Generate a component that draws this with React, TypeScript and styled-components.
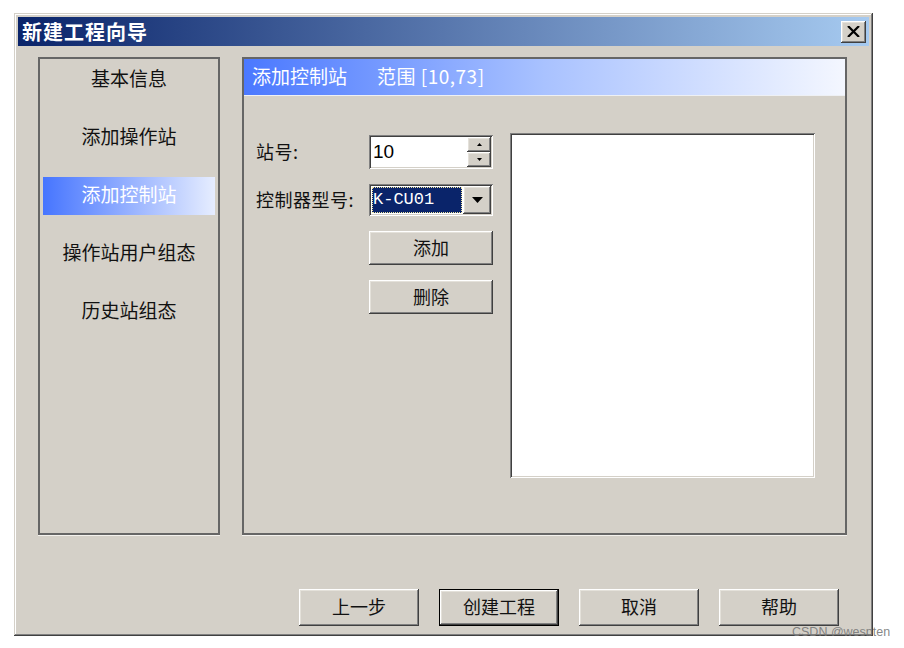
import styled, { createGlobalStyle, css } from 'styled-components';

const GlobalStyle = createGlobalStyle`
  body {
    margin: 0;
    background: #ffffff;
    font-family: "Noto Sans CJK SC", "Liberation Sans", sans-serif;
  }
`;

const raised = css`
  box-shadow: inset -1px -1px #404040, inset 1px 1px #ffffff,
    inset -2px -2px #808080, inset 2px 2px #e4e1da;
`;

const sunken = css`
  box-shadow: inset 1px 1px #808080, inset -1px -1px #ffffff,
    inset 2px 2px #404040, inset -2px -2px #d4d0c8;
`;

const navItems = ['基本信息', '添加操作站', '添加控制站', '操作站用户组态', '历史站组态'];
const footerButtons = ['上一步', '创建工程', '取消', '帮助'];

function App() {
  return (
    <>
      <GlobalStyle />
      <Window>
        <TitleBar>
          <TitleText>新建工程向导</TitleText>
          <CloseButton>
            <svg width="13" height="11" viewBox="0 0 13 11">
              <path d="M1 0 L12 11 M12 0 L1 11" stroke="#000" strokeWidth="2.2" />
            </svg>
          </CloseButton>
        </TitleBar>

        <Body>
          <NavPanel>
            {navItems.map((item, i) => (
              <NavItem key={item} active={i === 2}>{item}</NavItem>
            ))}
          </NavPanel>

          <MainPanel>
            <Header>
              添加控制站
              <Range>范围 [10,73]</Range>
            </Header>
            <Content>
              <Form>
                <Label>站号:</Label>
                <Spinner>
                  <SpinValue>10</SpinValue>
                  <SpinButtons>
                    <SpinButton>
                      <svg width="5" height="3" viewBox="0 0 5 3"><polygon points="2.5,0 5,3 0,3" fill="#000" /></svg>
                    </SpinButton>
                    <SpinButton>
                      <svg width="5" height="3" viewBox="0 0 5 3"><polygon points="0,0 5,0 2.5,3" fill="#000" /></svg>
                    </SpinButton>
                  </SpinButtons>
                </Spinner>

                <Label>控制器型号:</Label>
                <Combo>
                  <ComboValue>K-CU01</ComboValue>
                  <ComboArrow>
                    <svg width="11" height="6" viewBox="0 0 11 6"><polygon points="0,0 11,0 5.5,6" fill="#000" /></svg>
                  </ComboArrow>
                </Combo>

                <FormButton>添加</FormButton>
                <FormButton>删除</FormButton>
              </Form>
              <ListBox />
            </Content>
          </MainPanel>
        </Body>

        <Footer>
          {footerButtons.map((label) => (
            <DialogButton key={label} isDefault={label === '创建工程'}>{label}</DialogButton>
          ))}
        </Footer>

        <Watermark>CSDN @wespten</Watermark>
      </Window>
    </>
  );
}

export default App;

const Window = styled.div`
  position: relative;
  margin: 13px 0 0 14px;
  width: 859px;
  height: 623px;
  box-sizing: border-box;
  padding: 4px;
  background: #d4d0c8;
  box-shadow: inset -1px -1px #404040, inset 1px 1px #d4d0c8,
    inset -2px -2px #808080, inset 2px 2px #ffffff;
  display: flex;
  flex-direction: column;
`;

const TitleBar = styled.div`
  height: 29px;
  display: flex;
  align-items: center;
  justify-content: space-between;
  padding: 0 3px 0 4px;
  background: linear-gradient(to right, #0a246a, #a6caf0);
`;

const TitleText = styled.div`
  color: #ffffff;
  font-size: 20px;
  font-weight: 700;
  letter-spacing: 1px;
  line-height: 29px;
`;

const CloseButton = styled.div`
  width: 25px;
  height: 22px;
  background: #d4d0c8;
  ${raised};
  display: flex;
  align-items: center;
  justify-content: center;
`;

const Body = styled.div`
  display: flex;
  gap: 22px;
  padding: 11px 0 0 20px;
`;

const NavPanel = styled.div`
  width: 182px;
  height: 478px;
  box-sizing: border-box;
  border: 2px solid #666666;
  box-shadow: 0 1px 0 #f4f2ee;
  padding: 2px 3px 0;
  display: flex;
  flex-direction: column;
  gap: 20px;
`;

const NavItem = styled.div<{ active?: boolean }>`
  height: 38px;
  box-sizing: border-box;
  padding-bottom: 5px;
  display: flex;
  align-items: center;
  justify-content: center;
  font-size: 19px;
  color: #111111;
  ${(p) => p.active && css`
    color: #ffffff;
    background: linear-gradient(to right, #4675ff, #e6edff);
  `}
`;

const MainPanel = styled.div`
  width: 605px;
  height: 478px;
  box-sizing: border-box;
  border: 2px solid #666666;
  box-shadow: 0 1px 0 #f4f2ee;
  display: flex;
  flex-direction: column;
`;

const Header = styled.div`
  height: 37px;
  box-sizing: border-box;
  padding: 0 0 4px 8px;
  display: flex;
  align-items: center;
  color: #ffffff;
  font-size: 19px;
  background: linear-gradient(to right, #4a78ff, #a9c2ff 50%, #f4f7ff);
  border-bottom: 1px solid #eef0f4;
`;

const Range = styled.span`
  margin-left: 30px;
  letter-spacing: 0.5px;
`;

const Content = styled.div`
  display: flex;
  align-items: flex-start;
  padding: 37px 0 0 12px;
`;

const Form = styled.div`
  margin-top: 2px;
  display: grid;
  grid-template-columns: 113px 124px;
  row-gap: 15px;
  align-items: center;
`;

const Label = styled.div`
  font-size: 18px;
  color: #111111;
  letter-spacing: 0.5px;
  padding-bottom: 2px;
`;

const Spinner = styled.div`
  height: 34px;
  box-sizing: border-box;
  padding: 2px;
  background: #ffffff;
  ${sunken};
  display: flex;
`;

const SpinValue = styled.div`
  flex: 1;
  padding-left: 2px;
  font-family: "Liberation Sans", sans-serif;
  font-size: 19px;
  line-height: 29px;
  color: #000000;
`;

const SpinButtons = styled.div`
  width: 24px;
  display: flex;
  flex-direction: column;
`;

const SpinButton = styled.div`
  flex: 1;
  background: #d4d0c8;
  ${raised};
  display: flex;
  align-items: center;
  justify-content: center;
`;

const Combo = styled.div`
  height: 32px;
  box-sizing: border-box;
  padding: 2px;
  background: #ffffff;
  ${sunken};
  display: flex;
`;

const ComboValue = styled.div`
  flex: 1;
  margin: 1px;
  background: #0a246a;
  outline: 1px dotted #f0e6a0;
  outline-offset: -1px;
  color: #ffffff;
  font-family: "Liberation Mono", monospace;
  font-size: 17px;
  line-height: 26px;
  padding-left: 1px;
`;

const ComboArrow = styled.div`
  width: 28px;
  background: #d4d0c8;
  ${raised};
  display: flex;
  align-items: center;
  justify-content: center;
`;

const FormButton = styled.div`
  grid-column: 2;
  height: 34px;
  box-sizing: border-box;
  padding-bottom: 3px;
  background: #d4d0c8;
  ${raised};
  display: flex;
  align-items: center;
  justify-content: center;
  font-size: 18px;
  color: #111111;
`;

const ListBox = styled.div`
  margin-left: 17px;
  width: 305px;
  height: 345px;
  box-sizing: border-box;
  background: #ffffff;
  ${sunken};
`;

const Footer = styled.div`
  display: flex;
  justify-content: flex-end;
  gap: 20px;
  margin-top: 54px;
  padding-right: 30px;
`;

const DialogButton = styled.div<{ isDefault?: boolean }>`
  width: 120px;
  height: 37px;
  box-sizing: border-box;
  padding-bottom: 3px;
  background: #d4d0c8;
  ${raised};
  display: flex;
  align-items: center;
  justify-content: center;
  font-size: 18px;
  color: #111111;
  ${(p) => p.isDefault && css`
    border: 1px solid #000000;
  `}
`;

const Watermark = styled.div`
  position: absolute;
  left: 778px;
  top: 612px;
  font-family: "Liberation Sans", sans-serif;
  font-size: 12.5px;
  color: rgba(120, 120, 120, 0.9);
  white-space: nowrap;
`;
